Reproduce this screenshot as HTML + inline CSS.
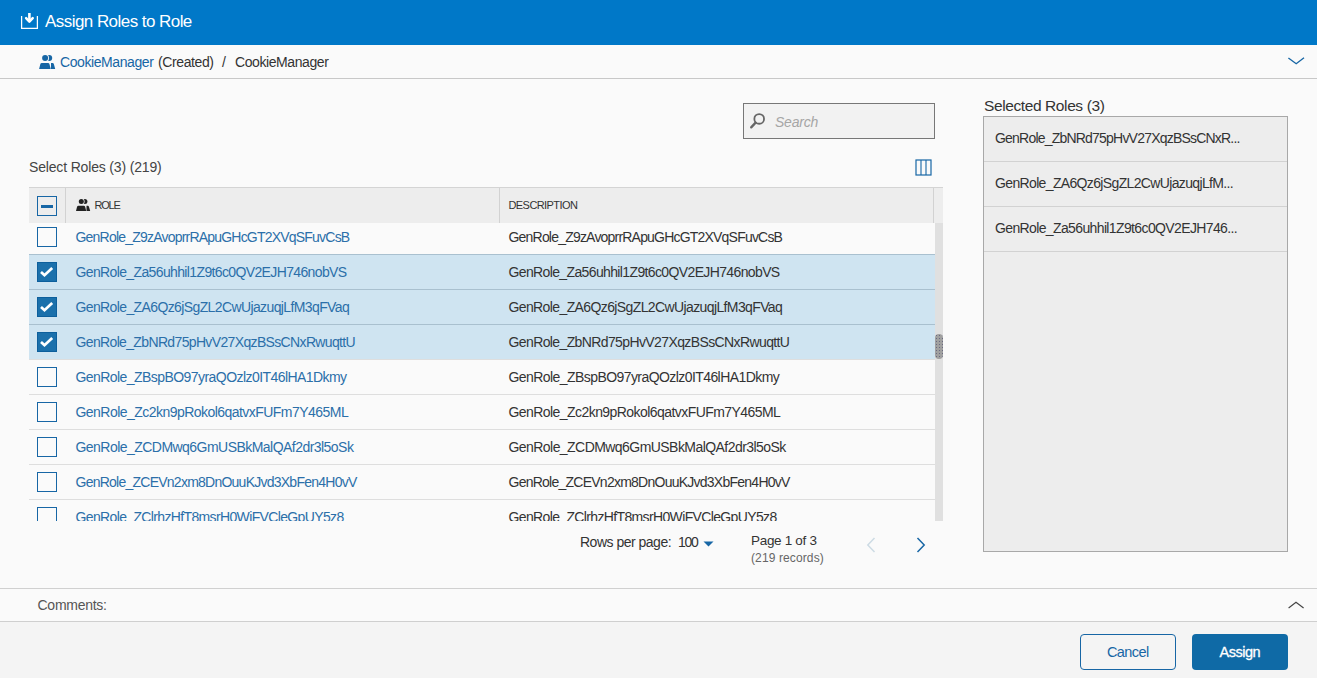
<!DOCTYPE html>
<html><head><meta charset="utf-8">
<style>
*{box-sizing:border-box;margin:0;padding:0}
html,body{width:1317px;height:678px;overflow:hidden;background:#fafafa;font-family:"Liberation Sans",sans-serif;position:relative}
.a{position:absolute;white-space:nowrap}
</style></head><body>
<div class="a" style="left:0;top:0;width:1317px;height:45px;background:#0078c8"></div>
<svg class="a" style="left:20px;top:12px" width="20" height="19" viewBox="0 0 20 19">
<path d="M1.6 4 V16.4 H17.4 V4" fill="none" stroke="#fff" stroke-width="1.25"/>
<path d="M8.1 1 H10.7 V10 H8.1 Z" fill="#fff"/><path d="M6.1 6.1 L9.4 9.6 L12.7 6.1" fill="none" stroke="#fff" stroke-width="2.5" stroke-linecap="round" stroke-linejoin="round"/></svg>
<div class="a" id="title" style="left:45px;top:10.91px;font-size:17px;line-height:22px;color:#fff;letter-spacing:-0.552px;">Assign Roles to Role</div>
<div class="a" style="left:0;top:78px;width:1317px;height:1px;background:#c8c8c8"></div>
<svg class="a" style="left:39px;top:55px" width="17" height="14" viewBox="0 0 17 14">
<circle cx="10.2" cy="3" r="3" fill="#1766a5"/><circle cx="6.1" cy="3" r="3.9" fill="#fafafa"/><circle cx="6.1" cy="3" r="3" fill="#1766a5"/>
<path d="M0.1 14 L1.3 9.2 Q1.6 8 2.8 8 H9 Q10.2 8 10.5 9.2 L11.75 14 Z" fill="#1766a5"/>
<path d="M12 14 V8 H13.6 Q14.6 8 14.9 9.2 L16.2 14 Z" fill="#1766a5"/></svg>
<div class="a" id="cr1" style="left:60px;top:53.15px;font-size:14px;line-height:18px;color:#1766a5;letter-spacing:-0.417px;">CookieManager</div>
<div class="a" id="cr2" style="left:158px;top:53.15px;font-size:14px;line-height:18px;color:#333;letter-spacing:-0.391px;">(Created)</div>
<div class="a" id="cr3" style="left:222px;top:53.15px;font-size:14px;line-height:18px;color:#333;letter-spacing:0.000px;">/</div>
<div class="a" id="cr4" style="left:235px;top:53.15px;font-size:14px;line-height:18px;color:#333;letter-spacing:-0.417px;">CookieManager</div>
<svg class="a" style="left:1287px;top:56px" width="18" height="10" viewBox="0 0 18 10"><path d="M1.4 2.0 L9.2 7.7 L17 1.8" fill="none" stroke="#1766a5" stroke-width="1.4"/></svg>
<div class="a" style="left:743px;top:103px;width:192px;height:36px;border:1px solid #777;background:#f2f2f2"></div>
<svg class="a" style="left:748px;top:112px" width="19" height="18" viewBox="0 0 19 18">
<circle cx="11.2" cy="6.9" r="4.85" fill="none" stroke="#666" stroke-width="1.8"/>
<path d="M7.6 10.6 L3.2 15.4" stroke="#666" stroke-width="2.3" stroke-linecap="round"/></svg>
<div class="a" id="search" style="left:775px;top:112.75px;font-size:14px;line-height:18px;color:#a6a6a6;letter-spacing:-0.220px;font-style:italic;">Search</div>
<div class="a" id="selroles" style="left:29px;top:158.15px;font-size:14px;line-height:18px;color:#444;letter-spacing:-0.164px;">Select Roles (3) (219)</div>
<svg class="a" style="left:915px;top:159px" width="17" height="17" viewBox="0 0 17 17">
<rect x="1" y="1" width="15" height="15" fill="none" stroke="#1766a5" stroke-width="1.2"/>
<path d="M6 1 V16 M11 1 V16" stroke="#1766a5" stroke-width="1.1"/></svg>
<div class="a" style="left:29px;top:187px;width:914px;height:1px;background:#d4d4d4"></div>
<div class="a" style="left:29px;top:188px;width:914px;height:35px;background:#ededed"></div>
<div class="a" style="left:37px;top:196px;width:20px;height:20px;border:1px solid #1766a5"></div>
<div class="a" style="left:41px;top:205px;width:12px;height:3px;background:#1766a5"></div>
<div class="a" style="left:65px;top:188px;width:1px;height:35px;background:#d2d2d2"></div>
<svg class="a" style="left:76px;top:199px" width="15" height="12" viewBox="0 0 15 12">
<circle cx="8.9" cy="2.6" r="2.5" fill="#222"/><circle cx="5.3" cy="2.6" r="3.3" fill="#ededed"/><circle cx="5.3" cy="2.6" r="2.5" fill="#222"/>
<path d="M0 12 L1 7.9 Q1.3 6.8 2.4 6.8 H7.8 Q8.9 6.8 9.2 7.9 L10.2 12 Z" fill="#222"/>
<path d="M10.5 12 V6.8 H11.8 Q12.7 6.8 13 7.9 L14.2 12 Z" fill="#222"/></svg>
<div class="a" id="role" style="left:94.5px;top:198.19px;font-size:11px;line-height:14px;color:#333;letter-spacing:-1.199px;">ROLE</div>
<div class="a" style="left:499px;top:188px;width:1px;height:35px;background:#d2d2d2"></div>
<div class="a" id="desc" style="left:508.5px;top:198.19px;font-size:11px;line-height:14px;color:#333;letter-spacing:-0.580px;">DESCRIPTION</div>
<div class="a" style="left:933px;top:188px;width:1px;height:35px;background:#d2d2d2"></div>
<div class="a" style="left:29px;top:223px;width:906px;height:298px;overflow:hidden"><div class="a" style="left:0;top:-4px;width:906px;height:35px;background:#fafafa;border-top:1px solid #dedede"><div class="a" style="left:8px;top:7px;width:20px;height:20px;border:1px solid #1766a5"></div><div class="a" id="rn0" style="left:46.5px;top:8.15px;font-size:14px;line-height:18px;color:#2b6fa9;letter-spacing:-0.792px;">GenRole_Z9zAvoprrRApuGHcGT2XVqSFuvCsB</div><div class="a" id="rd0" style="left:479.5px;top:8.15px;font-size:14px;line-height:18px;color:#333;letter-spacing:-0.799px;">GenRole_Z9zAvoprrRApuGHcGT2XVqSFuvCsB</div></div><div class="a" style="left:0;top:31px;width:906px;height:35px;background:#cfe4f1;border-top:1px solid #a9c0cf"><div class="a" style="left:8px;top:7px;width:20px;height:20px;background:#1b70ab;border:1px solid #0d5f9c"><svg class="a" style="left:0;top:0" width="18" height="18" viewBox="0 0 18 18"><path d="M3.0 8.9 L6.5 12.2 L14.2 4.9" fill="none" stroke="#fff" stroke-width="2.7"/></svg></div><div class="a" id="rn1" style="left:46.5px;top:8.15px;font-size:14px;line-height:18px;color:#2b6fa9;letter-spacing:-0.631px;">GenRole_Za56uhhil1Z9t6c0QV2EJH746nobVS</div><div class="a" id="rd1" style="left:479.5px;top:8.15px;font-size:14px;line-height:18px;color:#333;letter-spacing:-0.629px;">GenRole_Za56uhhil1Z9t6c0QV2EJH746nobVS</div></div><div class="a" style="left:0;top:66px;width:906px;height:35px;background:#cfe4f1;border-top:1px solid #a9c0cf"><div class="a" style="left:8px;top:7px;width:20px;height:20px;background:#1b70ab;border:1px solid #0d5f9c"><svg class="a" style="left:0;top:0" width="18" height="18" viewBox="0 0 18 18"><path d="M3.0 8.9 L6.5 12.2 L14.2 4.9" fill="none" stroke="#fff" stroke-width="2.7"/></svg></div><div class="a" id="rn2" style="left:46.5px;top:8.15px;font-size:14px;line-height:18px;color:#2b6fa9;letter-spacing:-0.615px;">GenRole_ZA6Qz6jSgZL2CwUjazuqjLfM3qFVaq</div><div class="a" id="rd2" style="left:479.5px;top:8.15px;font-size:14px;line-height:18px;color:#333;letter-spacing:-0.613px;">GenRole_ZA6Qz6jSgZL2CwUjazuqjLfM3qFVaq</div></div><div class="a" style="left:0;top:101px;width:906px;height:35px;background:#cfe4f1;border-top:1px solid #a9c0cf"><div class="a" style="left:8px;top:7px;width:20px;height:20px;background:#1b70ab;border:1px solid #0d5f9c"><svg class="a" style="left:0;top:0" width="18" height="18" viewBox="0 0 18 18"><path d="M3.0 8.9 L6.5 12.2 L14.2 4.9" fill="none" stroke="#fff" stroke-width="2.7"/></svg></div><div class="a" id="rn3" style="left:46.5px;top:8.15px;font-size:14px;line-height:18px;color:#2b6fa9;letter-spacing:-0.646px;">GenRole_ZbNRd75pHvV27XqzBSsCNxRwuqttU</div><div class="a" id="rd3" style="left:479.5px;top:8.15px;font-size:14px;line-height:18px;color:#333;letter-spacing:-0.611px;">GenRole_ZbNRd75pHvV27XqzBSsCNxRwuqttU</div></div><div class="a" style="left:0;top:136px;width:906px;height:35px;background:#fafafa;border-top:1px solid #dedede"><div class="a" style="left:8px;top:7px;width:20px;height:20px;border:1px solid #1766a5"></div><div class="a" id="rn4" style="left:46.5px;top:8.15px;font-size:14px;line-height:18px;color:#2b6fa9;letter-spacing:-0.560px;">GenRole_ZBspBO97yraQOzlz0IT46lHA1Dkmy</div><div class="a" id="rd4" style="left:479.5px;top:8.15px;font-size:14px;line-height:18px;color:#333;letter-spacing:-0.570px;">GenRole_ZBspBO97yraQOzlz0IT46lHA1Dkmy</div></div><div class="a" style="left:0;top:171px;width:906px;height:35px;background:#fafafa;border-top:1px solid #dedede"><div class="a" style="left:8px;top:7px;width:20px;height:20px;border:1px solid #1766a5"></div><div class="a" id="rn5" style="left:46.5px;top:8.15px;font-size:14px;line-height:18px;color:#2b6fa9;letter-spacing:-0.539px;">GenRole_Zc2kn9pRokol6qatvxFUFm7Y465ML</div><div class="a" id="rd5" style="left:479.5px;top:8.15px;font-size:14px;line-height:18px;color:#333;letter-spacing:-0.562px;">GenRole_Zc2kn9pRokol6qatvxFUFm7Y465ML</div></div><div class="a" style="left:0;top:206px;width:906px;height:35px;background:#fafafa;border-top:1px solid #dedede"><div class="a" style="left:8px;top:7px;width:20px;height:20px;border:1px solid #1766a5"></div><div class="a" id="rn6" style="left:46.5px;top:8.15px;font-size:14px;line-height:18px;color:#2b6fa9;letter-spacing:-0.537px;">GenRole_ZCDMwq6GmUSBkMalQAf2dr3l5oSk</div><div class="a" id="rd6" style="left:479.5px;top:8.15px;font-size:14px;line-height:18px;color:#333;letter-spacing:-0.555px;">GenRole_ZCDMwq6GmUSBkMalQAf2dr3l5oSk</div></div><div class="a" style="left:0;top:241px;width:906px;height:35px;background:#fafafa;border-top:1px solid #dedede"><div class="a" style="left:8px;top:7px;width:20px;height:20px;border:1px solid #1766a5"></div><div class="a" id="rn7" style="left:46.5px;top:8.15px;font-size:14px;line-height:18px;color:#2b6fa9;letter-spacing:-0.755px;">GenRole_ZCEVn2xm8DnOuuKJvd3XbFen4H0vV</div><div class="a" id="rd7" style="left:479.5px;top:8.15px;font-size:14px;line-height:18px;color:#333;letter-spacing:-0.752px;">GenRole_ZCEVn2xm8DnOuuKJvd3XbFen4H0vV</div></div><div class="a" style="left:0;top:276px;width:906px;height:35px;background:#fafafa;border-top:1px solid #dedede"><div class="a" style="left:8px;top:7px;width:20px;height:20px;border:1px solid #1766a5"></div><div class="a" id="rn8" style="left:46.5px;top:8.15px;font-size:14px;line-height:18px;color:#2b6fa9;letter-spacing:-0.639px;">GenRole_ZClrhzHfT8msrH0WiFVCleGpUY5z8</div><div class="a" id="rd8" style="left:479.5px;top:8.15px;font-size:14px;line-height:18px;color:#333;letter-spacing:-0.639px;">GenRole_ZClrhzHfT8msrH0WiFVCleGpUY5z8</div></div></div>
<div class="a" style="left:935px;top:223px;width:8px;height:298px;background:#e0e0e0"></div>
<div class="a" style="left:935px;top:334px;width:8px;height:25px;border-radius:4px;background:#a0a0a0 radial-gradient(circle, #6a6a80 0.6px, transparent 0.9px) 0 0/3px 3px"></div>
<div class="a" id="rpp" style="left:580px;top:533.15px;font-size:14px;line-height:18px;color:#333;letter-spacing:-0.499px;">Rows per page:</div>
<div class="a" id="rpp100" style="left:678px;top:533.15px;font-size:14px;line-height:18px;color:#333;letter-spacing:-1.250px;">100</div>
<svg class="a" style="left:703px;top:541px" width="11" height="6" viewBox="0 0 11 6"><path d="M0.5 0.5 H10.5 L5.5 5.5 Z" fill="#1766a5"/></svg>
<div class="a" id="page" style="left:751px;top:532.12px;font-size:13.5px;line-height:18px;color:#333;letter-spacing:-0.310px;">Page 1 of 3</div>
<div class="a" id="recs" style="left:751px;top:549.84px;font-size:12px;line-height:16px;color:#666;letter-spacing:0.118px;">(219 records)</div>
<svg class="a" style="left:866px;top:537px" width="10" height="16" viewBox="0 0 10 16"><path d="M8.5 1 L1.8 8 L8.5 15" fill="none" stroke="#cddbe4" stroke-width="1.5"/></svg>
<svg class="a" style="left:916px;top:537px" width="10" height="16" viewBox="0 0 10 16"><path d="M1.5 1 L8.2 8 L1.5 15" fill="none" stroke="#1766a5" stroke-width="1.5"/></svg>
<div class="a" id="seltitle" style="left:984px;top:95.63px;font-size:15.5px;line-height:20px;color:#333;letter-spacing:-0.395px;">Selected Roles (3)</div>
<div class="a" style="left:983px;top:116px;width:305px;height:436px;border:1px solid #a8a8a8;background:#ededed"></div>
<div class="a" style="left:984px;top:161px;width:303px;height:1px;background:#d2d2d2"></div>
<div class="a" id="sel0" style="left:995px;top:129.15px;font-size:14px;line-height:18px;color:#333;letter-spacing:-0.791px;">GenRole_ZbNRd75pHvV27XqzBSsCNxR...</div>
<div class="a" style="left:984px;top:206px;width:303px;height:1px;background:#d2d2d2"></div>
<div class="a" id="sel1" style="left:995px;top:174.15px;font-size:14px;line-height:18px;color:#333;letter-spacing:-0.645px;">GenRole_ZA6Qz6jSgZL2CwUjazuqjLfM...</div>
<div class="a" style="left:984px;top:251px;width:303px;height:1px;background:#d2d2d2"></div>
<div class="a" id="sel2" style="left:995px;top:219.15px;font-size:14px;line-height:18px;color:#333;letter-spacing:-0.628px;">GenRole_Za56uhhil1Z9t6c0QV2EJH746...</div>
<div class="a" style="left:0;top:588px;width:1317px;height:1px;background:#d0d0d0"></div>
<div class="a" id="comments" style="left:37.5px;top:596.15px;font-size:14px;line-height:18px;color:#555;letter-spacing:-0.259px;">Comments:</div>
<svg class="a" style="left:1287px;top:600px" width="18" height="10" viewBox="0 0 18 10"><path d="M1.6 8.0 L9.0 2.2 L16.6 8.0" fill="none" stroke="#444" stroke-width="1.15"/></svg>
<div class="a" style="left:0;top:621px;width:1317px;height:1px;background:#cfcfcf"></div>
<div class="a" style="left:0;top:622px;width:1317px;height:56px;background:#f4f4f4"></div>
<div class="a" style="left:1080px;top:634px;width:96px;height:36px;border:1px solid #1766a5;border-radius:4px"></div>
<div class="a" id="cancel" style="left:1107px;top:643.47px;font-size:14.5px;line-height:19px;color:#1766a5;letter-spacing:-0.600px;">Cancel</div>
<div class="a" style="left:1192px;top:634px;width:96px;height:36px;border-radius:4px;background:#0f6aa6"></div>
<div class="a" id="assign" style="left:1219.6px;top:643.47px;font-size:14.5px;line-height:19px;color:#fff;letter-spacing:-0.490px;-webkit-text-stroke:0.3px #fff;">Assign</div>
</body></html>
